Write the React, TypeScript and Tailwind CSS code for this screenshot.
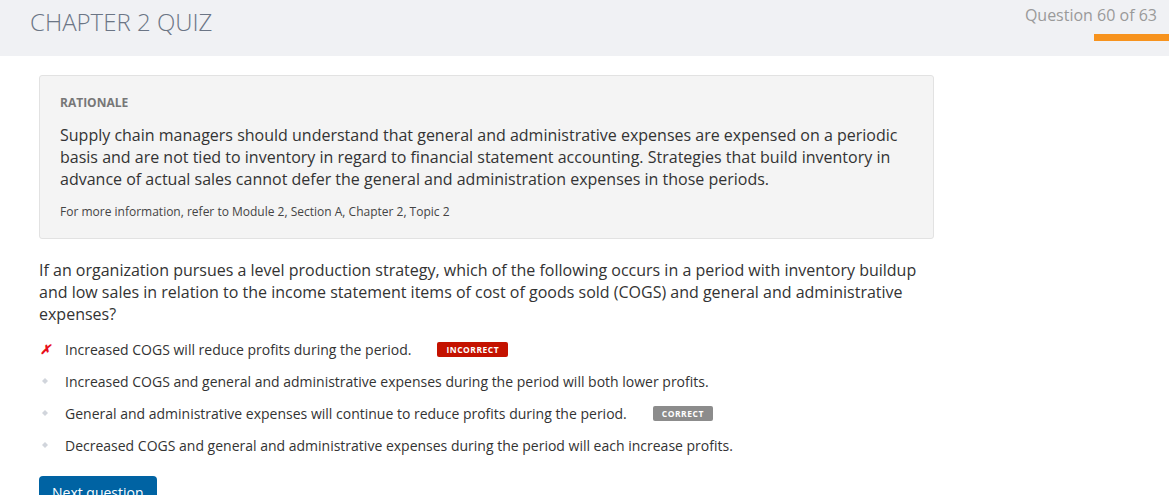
import React from "react";

const options = [
  { text: "Increased COGS will reduce profits during the period.", mark: "wrong", badge: "INCORRECT" },
  { text: "Increased COGS and general and administrative expenses during the period will both lower profits." },
  { text: "General and administrative expenses will continue to reduce profits during the period.", badge: "CORRECT" },
  { text: "Decreased COGS and general and administrative expenses during the period will each increase profits." },
];

function Bullet() {
  return (
    <svg width="8" height="8" viewBox="0 0 8 8" className="text-gray-300">
      <path d="M4 1 L7 4 L4 7 L1 4 Z" fill="currentColor" />
    </svg>
  );
}

export default function App() {
  return (
    <div className="min-h-screen bg-white text-[#333]" style={{ fontFamily: '"Open Sans", sans-serif' }}>
      {/* Header */}
      <div className="flex h-[56px] justify-between bg-[#f0f1f4]">
        <h1 className="pl-[30px] pt-[5px] text-[24px] font-light leading-[34px] text-[#6b7585]">CHAPTER 2 QUIZ</h1>
        <div className="flex flex-col items-end">
          <div className="pr-[12px] pt-[4px] text-[16px] leading-[22px] text-[#9a9a9a]">Question 60 of 63</div>
          <div className="mt-[8px] h-[7px] w-[75px] bg-[#f7931e]" />
        </div>
      </div>

      <div className="w-[895px] pl-[39px] box-content">
        {/* Rationale */}
        <div className="mt-[19px] rounded-[3px] border border-[#e2e2e2] bg-[#f4f4f4] px-[20px] pb-[18px] pt-[19px]">
          <div className="text-[12px] font-bold leading-[16px] text-[#777]">RATIONALE</div>
          <p className="mt-[13px] text-[16px] leading-[22px] text-[#333]">
            Supply chain managers should understand that general and administrative expenses are expensed on a periodic
            basis and are not tied to inventory in regard to financial statement accounting. Strategies that build inventory in
            advance of actual sales cannot defer the general and administration expenses in those periods.
          </p>
          <p className="mt-[14px] text-[12px] leading-[16px] text-[#444]">
            For more information, refer to Module 2, Section A, Chapter 2, Topic 2
          </p>
        </div>

        {/* Question */}
        <p className="mt-[20px] pr-[16px] text-[16px] leading-[22px] text-[#333]">
          If an organization pursues a level production strategy, which of the following occurs in a period with inventory buildup
          and low sales in relation to the income statement items of cost of goods sold (COGS) and general and administrative
          expenses?
        </p>

        <ul className="mt-[8px] flex flex-col">
          {options.map((o, i) => (
            <li key={i} className="flex h-[32px] items-center text-[14px] text-[#333]">
              <span className="flex w-[26px] items-center pl-[1px]">
                {o.mark === "wrong" ? (
                  <span className="text-[13px] font-bold italic leading-none text-[#e8101a]">✗</span>
                ) : (
                  <span className="pl-[1px]"><Bullet /></span>
                )}
              </span>
              <span>{o.text}</span>
              {o.badge && (
                <span
                  className={
                    "ml-[26px] rounded-[2px] px-[9px] py-[1px] text-[8.5px] font-bold leading-[13px] tracking-[0.5px] text-white " +
                    (o.badge === "INCORRECT" ? "bg-[#c41200]" : "bg-[#8c8c8c]")
                  }
                >
                  {o.badge}
                </span>
              )}
            </li>
          ))}
        </ul>

        <button className="mt-[15px] rounded-[4px] bg-[#0063a3] px-[13px] py-[7px] text-[14px] leading-[20px] text-white">
          Next question
        </button>
      </div>
    </div>
  );
}
